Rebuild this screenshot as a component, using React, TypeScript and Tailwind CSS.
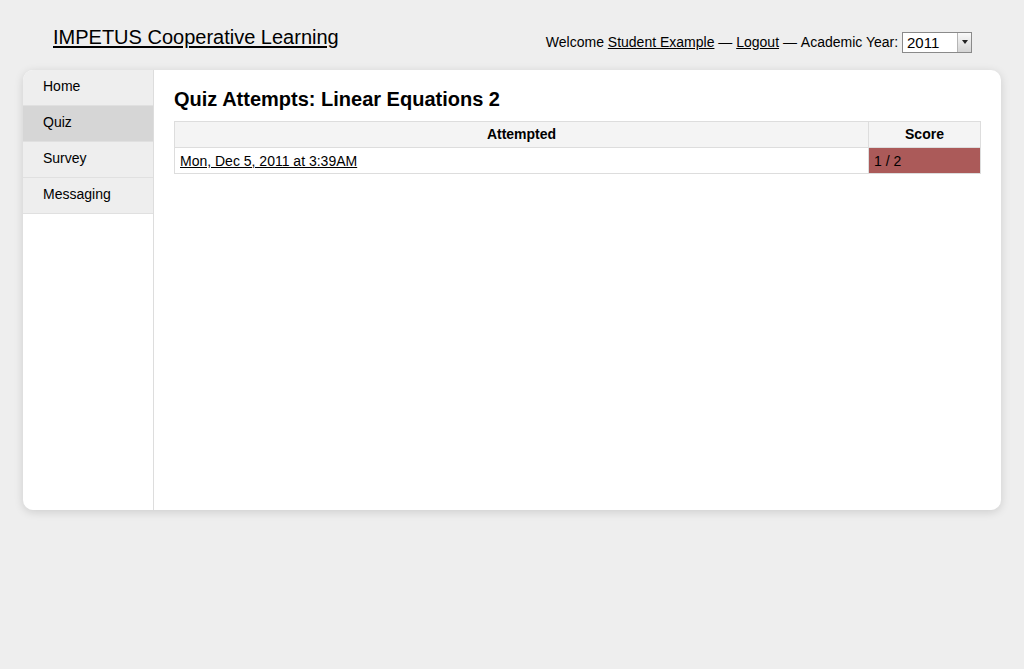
const navItems = ["Home", "Quiz", "Survey", "Messaging"]

const App = () => {
  const active = "Quiz"

  return (
    <div className="min-h-screen w-full bg-[#eeeeee] font-['Liberation_Sans',Arial,sans-serif] text-black">
      <div className="flex h-[70px] items-start justify-between pl-[53px] pr-[52px]">
        <a href="#" className="mt-[25px] text-[20px] leading-[24px] underline underline-offset-[2px]">
          IMPETUS Cooperative Learning
        </a>
        <div className="mt-[32px] flex items-center text-[14px] leading-[21px]">
          <span>Welcome&nbsp;</span>
          <a href="#" className="underline">Student Example</a>
          <span>&nbsp;—&nbsp;</span>
          <a href="#" className="underline">Logout</a>
          <span>&nbsp;—&nbsp;Academic Year:&nbsp;</span>
          <div className="-mt-[1px] flex h-[21px] w-[70px] border border-[#8a8a8a] bg-white">
            <span className="flex-1 pl-[4px] text-[15px] leading-[19px]">2011</span>
            <span className="flex w-[14px] items-center justify-center border-l border-[#b5b5b5] bg-gradient-to-b from-[#fafafa] to-[#d4d4d4]">
              <svg width="6" height="4" viewBox="0 0 6 4">
                <path d="M0 0 L6 0 L3 4 Z" fill="#222" />
              </svg>
            </span>
          </div>
        </div>
      </div>

      <div className="mx-[23px] flex h-[440px] overflow-hidden rounded-[10px] bg-white shadow-[0_2px_10px_rgba(0,0,0,0.14)]">
        <ul className="w-[131px] shrink-0 border-r border-[#dddddd]">
          {navItems.map((item) => (
            <li
              key={item}
              className={`h-[36px] border-b border-[#e0e0e0] pl-[20px] text-[14px] leading-[33px] ${
                item === active ? "bg-[#d6d6d6]" : "bg-[#eeeeee]"
              }`}
            >
              {item}
            </li>
          ))}
        </ul>

        <div className="flex-1 px-[20px] pt-[17px]">
          <h1 className="text-[20px] font-bold leading-[24px]">Quiz Attempts: Linear Equations 2</h1>
          <table className="mt-[10px] w-full border-collapse text-[14px]">
            <thead>
              <tr className="bg-[#f4f4f4]">
                <th className="h-[26px] border border-[#dddddd] font-bold">Attempted</th>
                <th className="h-[26px] w-[112px] border border-[#dddddd] font-bold">Score</th>
              </tr>
            </thead>
            <tbody>
              <tr>
                <td className="h-[26px] border border-[#dddddd] px-[5px] leading-[22px]">
                  <a href="#" className="underline">Mon, Dec 5, 2011 at 3:39AM</a>
                </td>
                <td className="h-[26px] border border-[#dddddd] bg-[#ab5a59] px-[5px] leading-[22px]">1 / 2</td>
              </tr>
            </tbody>
          </table>
        </div>
      </div>
    </div>
  )
}

export default App
